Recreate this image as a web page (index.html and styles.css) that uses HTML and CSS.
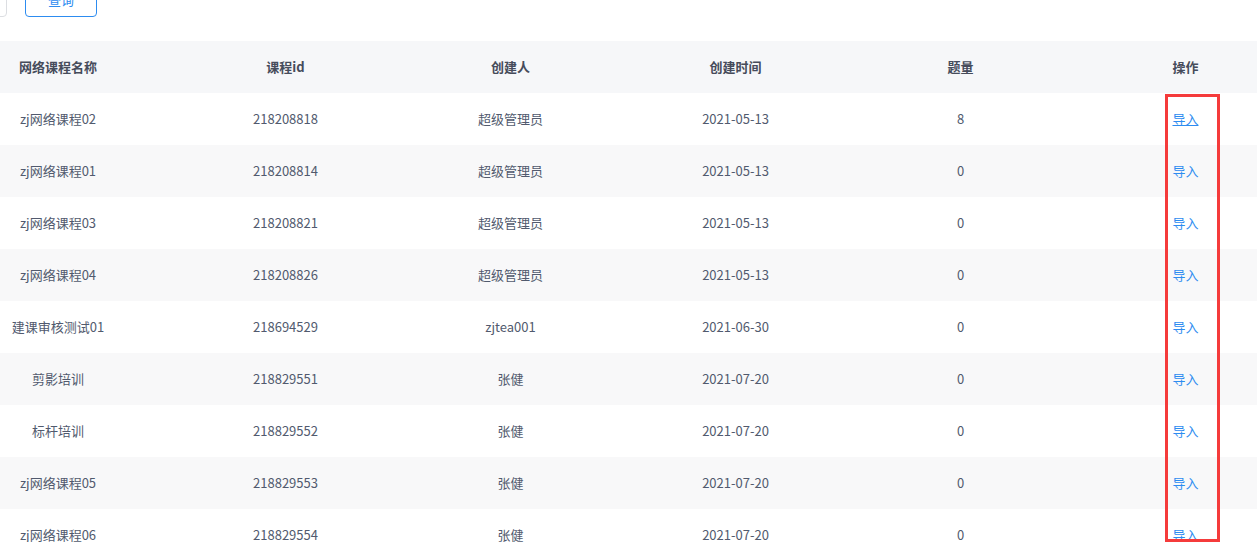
FILE: index.html
```html
<!DOCTYPE html>
<html lang="zh">
<head>
<meta charset="utf-8">
<link rel="stylesheet" href="styles.css">
</head>
<body>
<div class="page">
  <div class="toolbar">
    <div class="input"></div>
    <button class="btn">查询</button>
  </div>
  <div class="table-wrap">
    <div class="table">
      <div class="row head">
        <div>网络课程名称</div><div>课程id</div><div>创建人</div><div>创建时间</div><div>题量</div><div>操作</div>
      </div>
      <div class="row">
        <div>zj网络课程02</div><div>218208818</div><div>超级管理员</div><div>2021-05-13</div><div>8</div><div><a class="link hover">导入</a></div>
      </div>
      <div class="row">
        <div>zj网络课程01</div><div>218208814</div><div>超级管理员</div><div>2021-05-13</div><div>0</div><div><a class="link">导入</a></div>
      </div>
      <div class="row">
        <div>zj网络课程03</div><div>218208821</div><div>超级管理员</div><div>2021-05-13</div><div>0</div><div><a class="link">导入</a></div>
      </div>
      <div class="row">
        <div>zj网络课程04</div><div>218208826</div><div>超级管理员</div><div>2021-05-13</div><div>0</div><div><a class="link">导入</a></div>
      </div>
      <div class="row">
        <div>建课审核测试01</div><div>218694529</div><div>zjtea001</div><div>2021-06-30</div><div>0</div><div><a class="link">导入</a></div>
      </div>
      <div class="row">
        <div>剪影培训</div><div>218829551</div><div>张健</div><div>2021-07-20</div><div>0</div><div><a class="link">导入</a></div>
      </div>
      <div class="row">
        <div>标杆培训</div><div>218829552</div><div>张健</div><div>2021-07-20</div><div>0</div><div><a class="link">导入</a></div>
      </div>
      <div class="row">
        <div>zj网络课程05</div><div>218829553</div><div>张健</div><div>2021-07-20</div><div>0</div><div><a class="link">导入</a></div>
      </div>
      <div class="row">
        <div>zj网络课程06</div><div>218829554</div><div>张健</div><div>2021-07-20</div><div>0</div><div><a class="link">导入</a></div>
      </div>
    </div>
  </div>
  <div class="highlight"></div>
</div>
</body>
</html>
```
FILE: styles.css
```css
html, body {
  margin: 0;
  padding: 0;
  background: #fff;
  overflow: hidden;
}
body {
  font-family: "Noto Sans CJK SC", "Noto Sans", sans-serif;
  font-size: 13px;
  color: #515a6e;
}
.page {
  position: relative;
  width: 1257px;
  height: 542px;
  overflow: hidden;
}
.toolbar {
  height: 17px;
  display: flex;
  align-items: flex-end;
  overflow: hidden;
}
.input {
  flex: none;
  width: 180px;
  height: 32px;
  margin-left: -173px;
  box-sizing: border-box;
  border: 1px solid #dcdee2;
  border-radius: 4px;
}
.btn {
  flex: none;
  margin-left: 18px;
  width: 72px;
  height: 32px;
  box-sizing: border-box;
  border: 1px solid #2d8cf0;
  border-radius: 4px;
  background: #fff;
  color: #2d8cf0;
  font-family: inherit;
  font-size: 13px;
  padding: 0 0 2px;
  line-height: 28px;
}
.table-wrap {
  margin-top: 24px;
  overflow: hidden;
}
.table {
  width: 1355px;
  margin-left: -57px;
}
.row {
  display: grid;
  grid-template-columns: 230px 225px 225px 225px 225px 225px;
  height: 52px;
  box-sizing: border-box;
  padding-bottom: 2px;
  align-items: center;
  text-align: center;
  background: #fff;
}
.row:nth-child(odd) {
  background: #f8f8f9;
}
.row.head {
  background: #f6f7f9;
  font-weight: bold;
  color: #464c5b;
}
.link {
  color: #2d8cf0;
  cursor: pointer;
}
.link.hover {
  text-decoration: underline;
}
.highlight {
  position: absolute;
  left: 1165px;
  top: 94px;
  width: 55px;
  height: 448px;
  box-sizing: border-box;
  border: 3px solid #f53b3b;
}
```
